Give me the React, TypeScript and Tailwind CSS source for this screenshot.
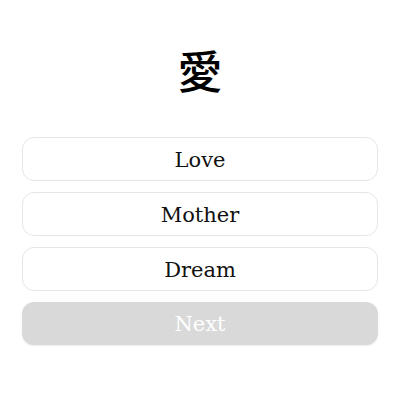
import React from "react";

export default function App() {
  const options = ["Love", "Mother", "Dream"];
  return (
    <div
      className="w-[400px] h-[400px] bg-white flex flex-col items-stretch px-[22px]"
      style={{ fontFamily: '"DejaVu Serif", "Noto Sans CJK JP", serif' }}
    >
      <div className="h-[137px] flex items-center justify-center">
        <span
          className="text-[45px] leading-none text-black mt-[2px] font-medium"
          style={{ fontFamily: '"Noto Sans CJK JP", serif' }}
        >
          愛
        </span>
      </div>
      <div className="flex flex-col gap-[11px]">
        {options.map((o) => (
          <button
            key={o}
            className="h-[44px] w-full rounded-[12px] border border-[#e6e6e6] bg-white text-[21px] text-[#111] flex items-center justify-center pt-[3px]"
          >
            {o}
          </button>
        ))}
        <button className="h-[43px] w-full rounded-[12px] bg-[#d9d9d9] text-[21px] text-white flex items-center justify-center pt-[3px] shadow-[0_1px_2px_rgba(0,0,0,0.08)]">
          Next
        </button>
      </div>
    </div>
  );
}
